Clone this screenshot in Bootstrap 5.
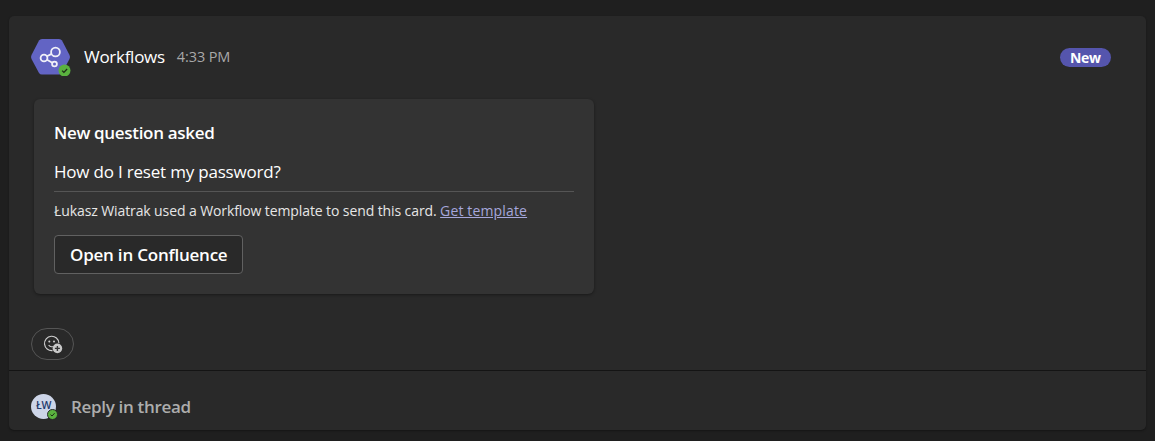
<!DOCTYPE html>
<html lang="en">
<head>
    <meta charset="UTF-8">
    <title>Workflows</title>
    <link rel="stylesheet" href="https://cdn.jsdelivr.net/npm/bootstrap@5.3.3/dist/css/bootstrap.min.css">
    <style>
        html, body { height: 100%; }
        body {
            background: #1f1f1f;
            color: #fff;
            font-family: "Open Sans", "Liberation Sans", sans-serif;
            padding: 16px 9px 11px;
            overflow: hidden;
        }
        .thread-panel {
            background: #292929;
            border-radius: 5px;
            height: 414px;
            box-shadow: 0 1px 2px rgba(0,0,0,.35);
        }
        .msg-area { height: 354px; padding: 22px 35px 0 21px; }
        .msg-head { height: 38px; }
        .bot-avatar { width: 42px; height: 38px; }
        .bot-name { font-size: 17px; margin-left: 12px; letter-spacing: -.28px; }
        .bot-time { font-size: 14.5px; color: #a8a8a8; margin-left: 12px; letter-spacing: -.1px; }
        .new-pill {
            background: #5555ad;
            border-radius: 10px;
            font-size: 14px;
            font-weight: 700;
            line-height: 19px;
            padding: 0 10.5px;
            letter-spacing: -.4px;
        }
        .adaptive-card {
            width: 560px;
            height: 195px;
            margin: 23px 0 0 4px;
            padding: 20px;
            background: #333;
            border-radius: 6px;
            box-shadow: 0 1px 3px rgba(0,0,0,.4);
        }
        .q-title { font-size: 17px; font-weight: 600; line-height: 28px; letter-spacing: -.32px; }
        .q-text { font-size: 17px; line-height: 24px; margin-top: 13px; padding-bottom: 6px; border-bottom: 1px solid #555; letter-spacing: -.2px; height: 32px; }
        .q-note { font-size: 14px; line-height: 20px; margin-top: 9px; color: #e6e6e6; letter-spacing: -.1px; white-space: nowrap; }
        .q-note a { color: #a6a7dc; letter-spacing: .15px; }
        .btn.open-btn {
            background: #292929;
            border: 1px solid #616161;
            border-radius: 4px;
            color: #fff;
            font-size: 17px;
            font-weight: 600;
            height: 39px;
            line-height: 36px;
            padding: 0 15px;
            margin-top: 14px;
            letter-spacing: -.22px;
        }
        .react-btn {
            width: 43px;
            height: 32px;
            margin: 34px 0 0 1px;
            border: 1px solid #555;
            border-radius: 16px;
            background: transparent;
        }
        .reply-row { height: 60px; border-top: 1px solid #141414; padding: 10px 22px 0; }
        .user-avatar {
            width: 25px;
            height: 25px;
            background: #cdd5e8;
            border-radius: 50%;
            color: #243a6b;
            font-size: 10.5px;
            font-weight: 600;
            letter-spacing: -.3px;
            margin-top: 1px;
        }
        .avatar-wrap { position: relative; }
        .status-dot { position: absolute; right: -2px; bottom: -1px; }
        .reply-text { font-size: 17px; font-weight: 600; color: #adadad; margin-left: 15px; padding-top: 2px; letter-spacing: -.32px; }
    </style>
</head>
<body>
    <div class="thread-panel d-flex flex-column">
        <div class="msg-area">
            <div class="msg-head d-flex align-items-center">
                <svg class="bot-avatar flex-shrink-0" viewBox="0 0 42 38">
                    <path d="M9 2.5 Q10 1 12 1 H29 Q31 1 32 2.5 L39.5 17 Q40.5 19 39.5 21 L32 35 Q31 36.5 29 36.5 H12 Q10 36.5 9 35 L1.5 21 Q.5 19 1.5 17 Z" fill="#6264c4"/>
                    <g fill="none" stroke="#f0f0f8" stroke-width="1.8">
                        <circle cx="25.5" cy="14" r="4.4"/>
                        <circle cx="14" cy="20" r="3.4"/>
                        <circle cx="24.5" cy="26" r="2.4"/>
                        <path d="M17 18.3 L21.6 15.9 M17 21.7 L22.3 24.8"/>
                    </g>
                    <circle cx="34.5" cy="32.5" r="6" fill="#5ab13f"/>
                    <path d="M32.1 32.6 L33.9 34.4 L37.1 31" fill="none" stroke="#1d2b17" stroke-width="1.3"/>
                </svg>
                <span class="bot-name">Workflows</span>
                <span class="bot-time">4:33 PM</span>
                <span class="new-pill ms-auto">New</span>
            </div>
            <div class="adaptive-card">
                <div class="q-title">New question asked</div>
                <div class="q-text">How do I reset my password?</div>
                <div class="q-note">Łukasz Wiatrak used a Workflow template to send this card. <a href="#">Get template</a></div>
                <button type="button" class="btn open-btn">Open in Confluence</button>
            </div>
            <button type="button" class="react-btn d-flex align-items-center justify-content-center p-0">
                <svg width="20" height="20" viewBox="0 0 20 20">
                    <path d="M9.5 16.6 A7.2 7.2 0 1 1 15.9 9" fill="none" stroke="#d0d0d0" stroke-width="1.1"/>
                    <circle cx="6.3" cy="7.6" r="1" fill="#d0d0d0"/>
                    <circle cx="11" cy="7.6" r="1" fill="#d0d0d0"/>
                    <path d="M5.6 11.2 Q7.6 13.4 9.8 12.4" fill="none" stroke="#d0d0d0" stroke-width="1.1"/>
                    <circle cx="14.4" cy="14.4" r="4.8" fill="#c8c8c8"/>
                    <path d="M14.4 11.9 V16.9 M11.9 14.4 H16.9" stroke="#333" stroke-width="1.4"/>
                </svg>
            </button>
        </div>
        <div class="reply-row d-flex align-items-center">
            <div class="avatar-wrap">
                <div class="user-avatar d-flex align-items-center justify-content-center">ŁW</div>
                <svg class="status-dot" width="11" height="11" viewBox="0 0 11 11">
                    <circle cx="5.5" cy="5.5" r="5" fill="#5ab13f" stroke="#292929" stroke-width="1"/>
                    <path d="M3.5 5.6 L5 7 L7.6 4.2" fill="none" stroke="#1d2b17" stroke-width="1"/>
                </svg>
            </div>
            <span class="reply-text">Reply in thread</span>
        </div>
    </div>
    <script src="https://cdn.jsdelivr.net/npm/bootstrap@5.3.3/dist/js/bootstrap.bundle.min.js"></script>
</body>
</html>
